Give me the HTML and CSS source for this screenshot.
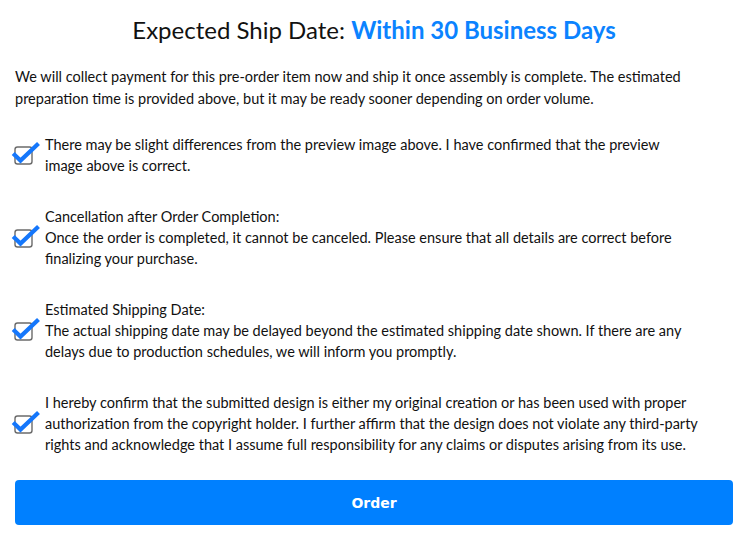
FILE: index.html
```html
<!DOCTYPE html>
<html lang="en">
<head>
<meta charset="utf-8">
<title>Pre-order</title>
<link rel="stylesheet" href="styles.css">
</head>
<body>
<main class="panel">
  <h1 class="title">Expected Ship Date: <span class="title-accent">Within 30 Business Days</span></h1>
  <p class="intro">We will collect payment for this pre-order item now and ship it once assembly is complete. The estimated preparation time is provided above, but it may be ready sooner depending on order volume.</p>

  <ul class="terms">
    <li class="term">
      <span class="check"><svg viewBox="0 0 30 24" width="30" height="24"><rect x="4" y="6" width="17" height="17" rx="2.5" fill="none" stroke="#6b6b6b" stroke-width="1.4"/><path d="M2.2 12.5 L9.5 19.5 L27.5 2.5" fill="none" stroke="#1577fb" stroke-width="4.2" stroke-linejoin="miter"/></svg></span>
      <span class="term-text">There may be slight differences from the preview image above. I have confirmed that the preview image above is correct.</span>
    </li>
    <li class="term">
      <span class="check"><svg viewBox="0 0 30 24" width="30" height="24"><rect x="4" y="6" width="17" height="17" rx="2.5" fill="none" stroke="#6b6b6b" stroke-width="1.4"/><path d="M2.2 12.5 L9.5 19.5 L27.5 2.5" fill="none" stroke="#1577fb" stroke-width="4.2" stroke-linejoin="miter"/></svg></span>
      <span class="term-text">Cancellation after Order Completion:<br>Once the order is completed, it cannot be canceled. Please ensure that all details are correct before finalizing your purchase.</span>
    </li>
    <li class="term">
      <span class="check"><svg viewBox="0 0 30 24" width="30" height="24"><rect x="4" y="6" width="17" height="17" rx="2.5" fill="none" stroke="#6b6b6b" stroke-width="1.4"/><path d="M2.2 12.5 L9.5 19.5 L27.5 2.5" fill="none" stroke="#1577fb" stroke-width="4.2" stroke-linejoin="miter"/></svg></span>
      <span class="term-text">Estimated Shipping Date:<br>The actual shipping date may be delayed beyond the estimated shipping date shown. If there are any delays due to production schedules, we will inform you promptly.</span>
    </li>
    <li class="term">
      <span class="check"><svg viewBox="0 0 30 24" width="30" height="24"><rect x="4" y="6" width="17" height="17" rx="2.5" fill="none" stroke="#6b6b6b" stroke-width="1.4"/><path d="M2.2 12.5 L9.5 19.5 L27.5 2.5" fill="none" stroke="#1577fb" stroke-width="4.2" stroke-linejoin="miter"/></svg></span>
      <span class="term-text">I hereby confirm that the submitted design is either my original creation or has been used with proper authorization from the copyright holder. I further affirm that the design does not violate any third-party rights and acknowledge that I assume full responsibility for any claims or disputes arising from its use.</span>
    </li>
  </ul>

  <button class="order-btn" type="button">Order</button>
</main>
</body>
</html>
```

FILE: styles.css
```css
* { box-sizing: border-box; }

html, body {
  margin: 0;
  padding: 0;
  background: #ffffff;
}

body {
  font-family: "Lato", "Noto Sans", sans-serif;
  color: #111111;
}

.panel {
  padding: 15px 15px 0 15px;
  display: flex;
  flex-direction: column;
}

.title {
  margin: 0;
  text-align: center;
  font-size: 24px;
  line-height: 30px;
  font-weight: 400;
  color: #111111;
}

.title-accent {
  color: #0b83ff;
  font-weight: 700;
}

.intro {
  margin: 21px 0 0 0;
  font-size: 14.5px;
  line-height: 22px;
}

.terms {
  list-style: none;
  margin: 24px 0 0 0;
  padding: 0;
  display: flex;
  flex-direction: column;
  gap: 30px;
}

.term {
  display: flex;
  align-items: center;
}

.check {
  flex: 0 0 29px;
  display: flex;
  margin-left: -4px;
  margin-right: 4px;
  margin-top: -4px;
}

.check svg { display: block; }

.term-text {
  flex: 0 1 655px;
  max-width: 655px;
  font-size: 14.5px;
  line-height: 21px;
}

.order-btn {
  margin-top: 25px;
  height: 45px;
  width: 100%;
  border: none;
  border-radius: 4px;
  background: #0080ff;
  color: #ffffff;
  font-family: "DejaVu Sans", Verdana, sans-serif;
  font-weight: 700;
  font-size: 14px;
  cursor: pointer;
}
```
